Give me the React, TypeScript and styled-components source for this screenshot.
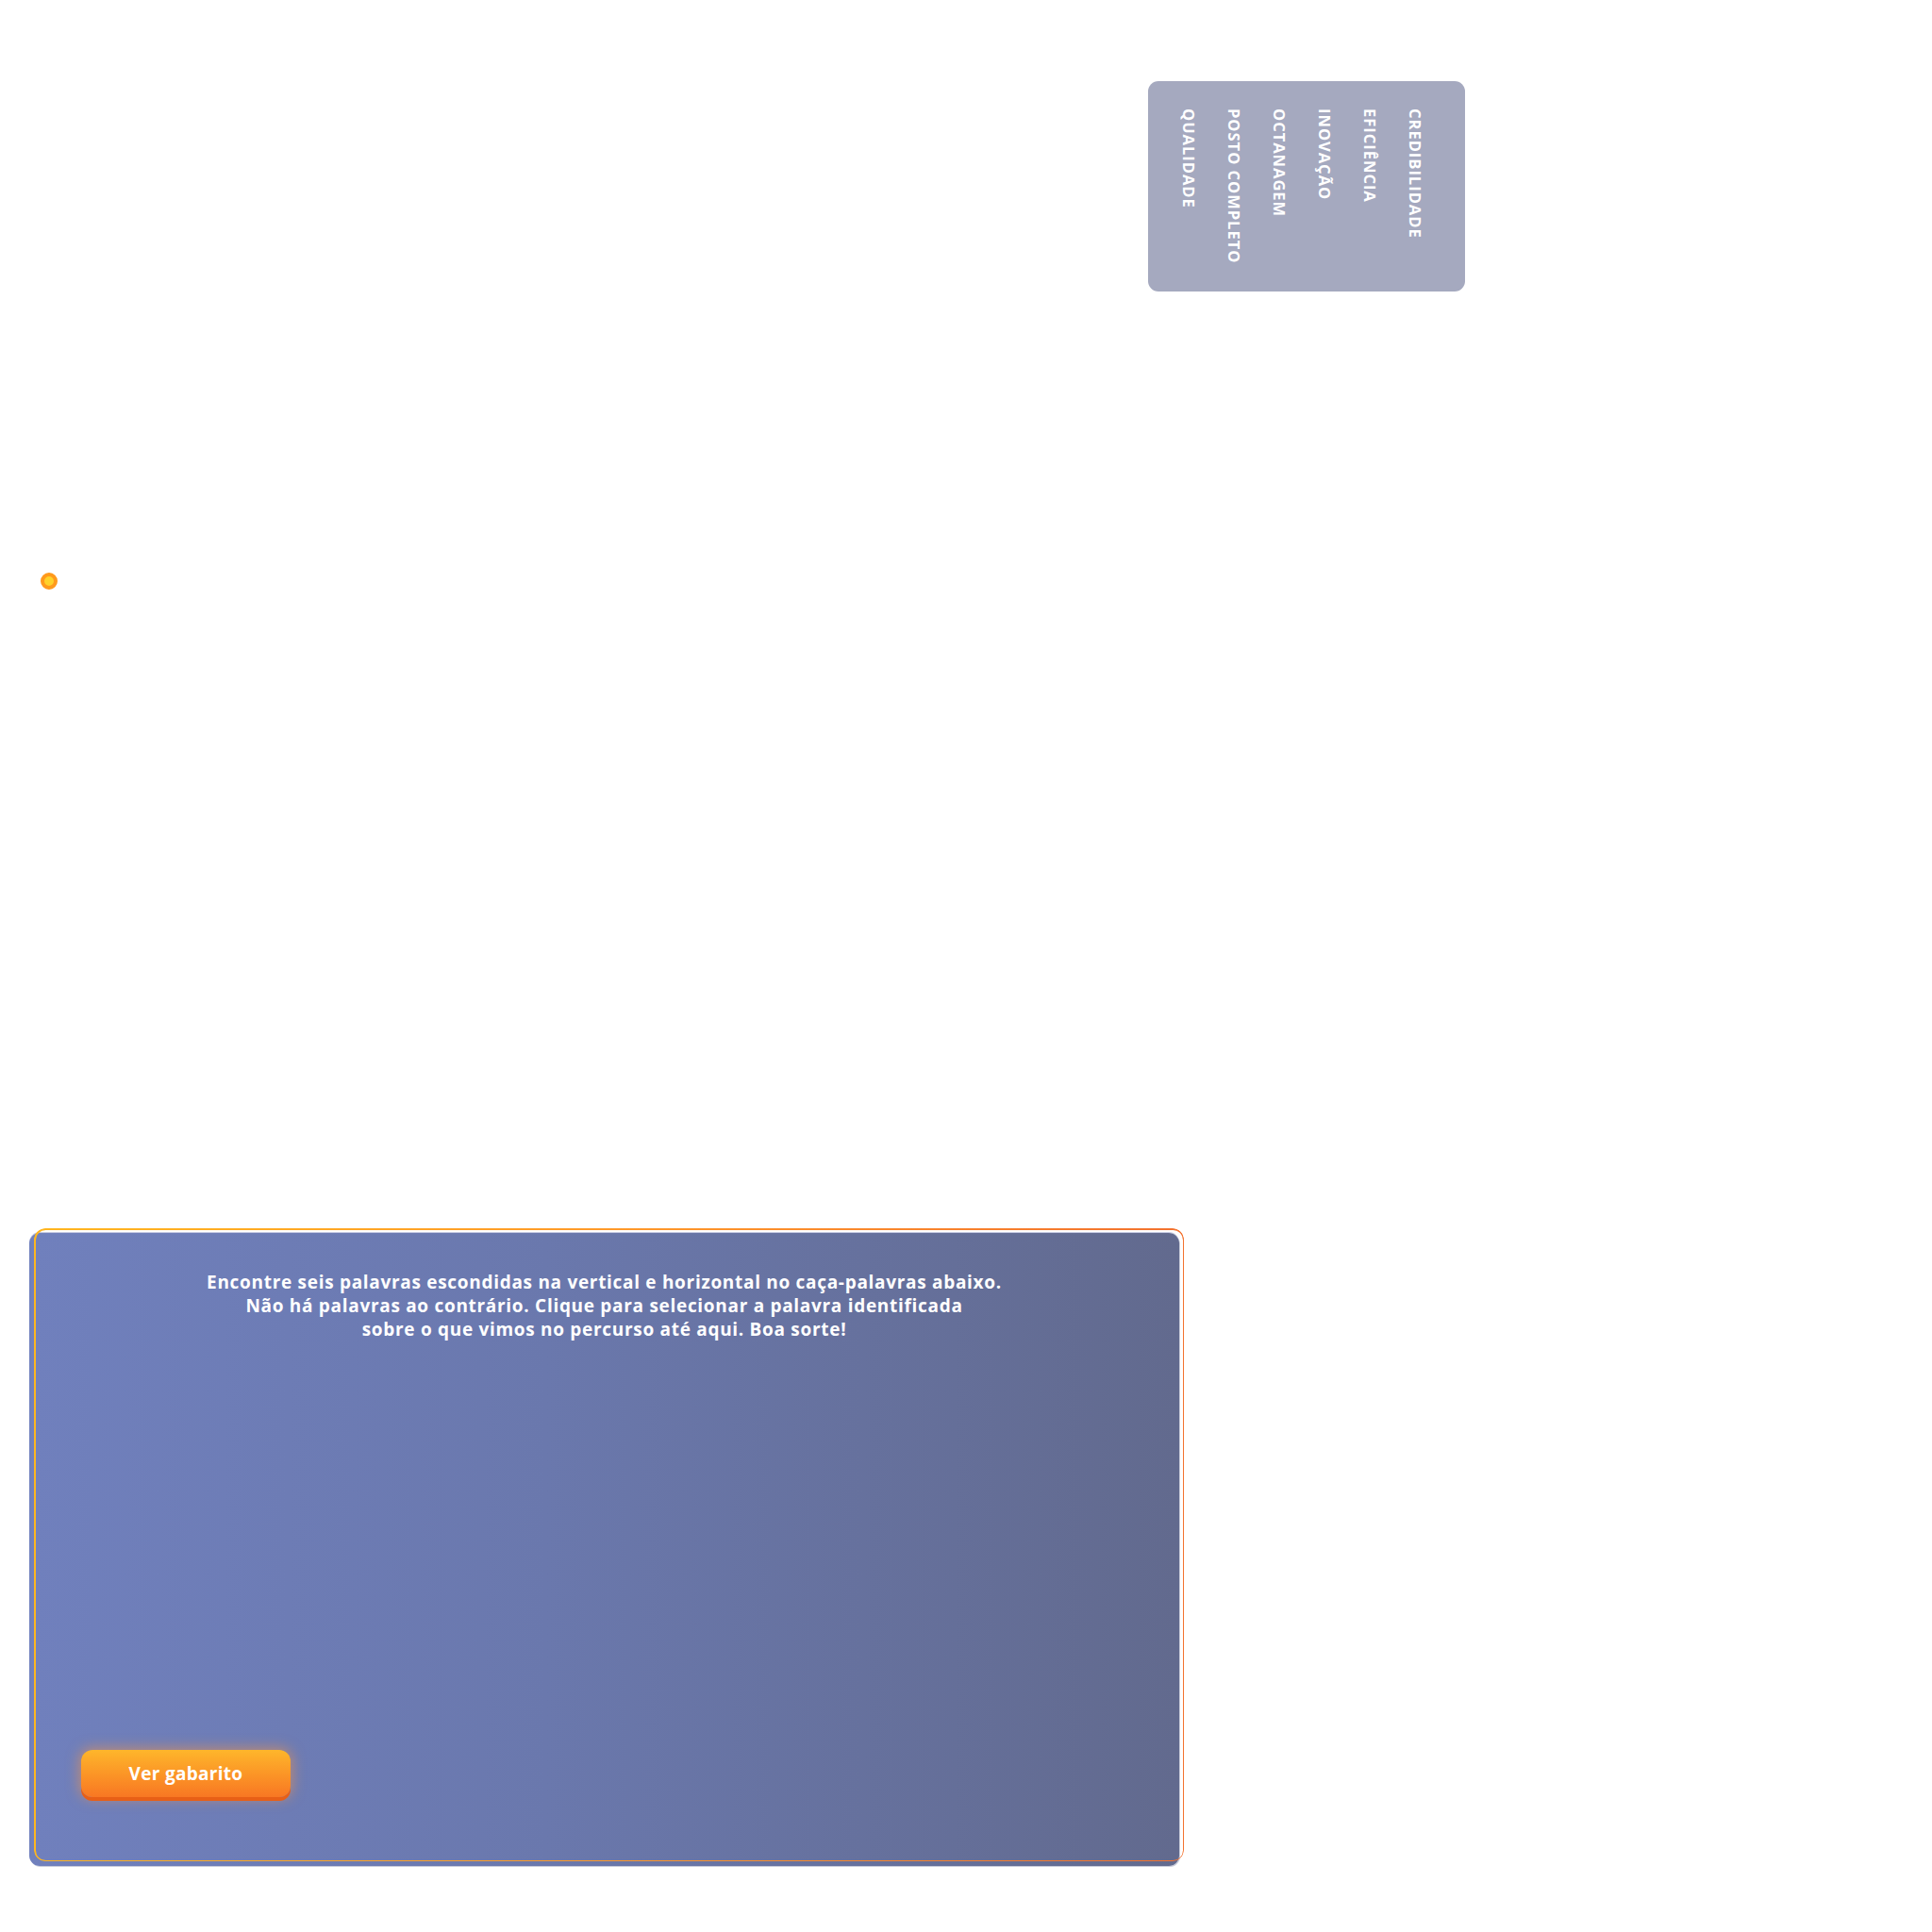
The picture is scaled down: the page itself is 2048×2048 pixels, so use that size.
import React from "react";
import styled, { createGlobalStyle } from "styled-components";

const Global = createGlobalStyle`
  html, body { margin: 0; padding: 0; background: #ffffff; }
  body { font-family: "Open Sans", Lato, sans-serif; }
`;

const Page = styled.div`
  width: 2048px;
  min-height: 2048px;
  padding-top: 86px;
  box-sizing: border-box;
  display: flex;
  flex-direction: column;
  align-items: flex-start;
`;

const WordBank = styled.div`
  margin-left: 1217px;
  width: 336px;
  height: 223px;
  box-sizing: border-box;
  padding: 29px 43px 0 0;
  background: #a5a9bf;
  border-radius: 11px;
  display: flex;
  flex-direction: row-reverse;
  align-items: flex-start;
  gap: 28px;
`;

const Word = styled.span`
  writing-mode: vertical-rl;
  font-family: "Open Sans", sans-serif;
  font-weight: 700;
  font-size: 16.5px;
  line-height: 20px;
  letter-spacing: 1px;
  color: #ffffff;
  white-space: nowrap;
`;

const Dot = styled.div`
  margin-top: 298px;
  margin-left: 43px;
  width: 18px;
  height: 18px;
  box-sizing: border-box;
  border-radius: 50%;
  background: #ffd22a;
  border: 4px solid #ff9a1c;
`;

const Panel = styled.section`
  position: relative;
  margin-top: 682px;
  margin-left: 31px;
  width: 1219px;
  height: 671px;
  box-sizing: border-box;
  padding: 40px 55px 69px;
  border-radius: 11px;
  background: linear-gradient(90deg, #7080bd 0%, #6a78ad 45%, #626a8e 100%);
  box-shadow: 0 -1px 0 #c4c8e0, 1px 1px 0 #c9ccda;
  display: flex;
  flex-direction: column;
  justify-content: space-between;
  align-items: flex-start;

  &::after {
    content: "";
    position: absolute;
    left: 5px;
    top: -5px;
    width: 100%;
    height: 100%;
    box-sizing: border-box;
    padding: 1.5px;
    border-radius: 12px;
    background: linear-gradient(90deg, #ffb61f 0%, #ff9a2a 50%, #f3722f 100%);
    -webkit-mask: linear-gradient(#000 0 0) content-box, linear-gradient(#000 0 0);
    -webkit-mask-composite: xor;
    mask-composite: exclude;
    pointer-events: none;
  }
`;

const Instructions = styled.p`
  margin: 0;
  align-self: stretch;
  text-align: center;
  color: #ffffff;
  font-family: "Open Sans", sans-serif;
  font-weight: 700;
  font-size: 19px;
  line-height: 25px;
  letter-spacing: 0.7px;
`;

const Button = styled.button`
  width: 222px;
  height: 50px;
  margin-bottom: 4px;
  border: none;
  border-radius: 12px;
  background: linear-gradient(180deg, #feb62b 0%, #fb9326 55%, #f87723 100%);
  box-shadow: 0 4px 0 #e85f16, 0 0 14px 2px rgba(255, 150, 60, 0.55);
  color: #ffffff;
  font-family: "Open Sans", sans-serif;
  font-weight: 700;
  font-size: 19px;
  letter-spacing: 0.3px;
  cursor: pointer;
  padding: 0;
`;

const words = [
  "CREDIBILIDADE",
  "EFICIÊNCIA",
  "INOVAÇÃO",
  "OCTANAGEM",
  "POSTO COMPLETO",
  "QUALIDADE",
];

export default function App() {
  return (
    <>
      <Global />
      <Page>
        <WordBank>
          {words.map((w) => (
            <Word key={w}>{w}</Word>
          ))}
        </WordBank>
        <Dot />
        <Panel>
          <Instructions>
            Encontre seis palavras escondidas na vertical e horizontal no caça-palavras abaixo.
            <br />
            Não há palavras ao contrário. Clique para selecionar a palavra identificada
            <br />
            sobre o que vimos no percurso até aqui. Boa sorte!
          </Instructions>
          <Button>Ver gabarito</Button>
        </Panel>
      </Page>
    </>
  );
}
